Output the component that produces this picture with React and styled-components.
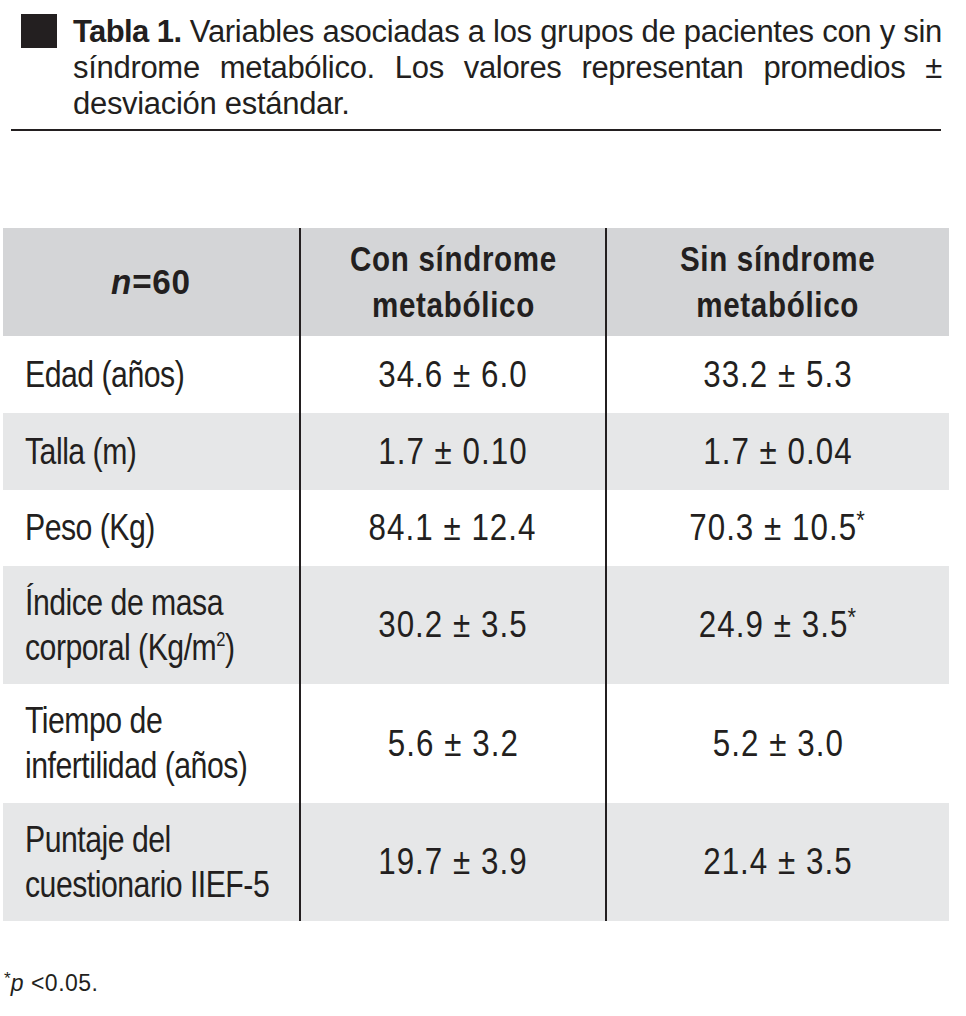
import styled, { createGlobalStyle } from 'styled-components';

const GlobalStyle = createGlobalStyle`
  html, body {
    margin: 0;
    padding: 0;
    background: #ffffff;
  }
  body {
    font-family: 'Liberation Sans', Arial, sans-serif;
    color: #231f20;
  }
`;

// label: first line, second line (optional), sup after the second line
const rows = [
  { label: ['Edad (años)'], con: '34.6 ± 6.0', sin: '33.2 ± 5.3', height: 77, shade: false },
  { label: ['Talla (m)'], con: '1.7 ± 0.10', sin: '1.7 ± 0.04', height: 77, shade: true },
  { label: ['Peso (Kg)'], con: '84.1 ± 12.4', sin: '70.3 ± 10.5', star: true, height: 76, shade: false },
  {
    label: ['Índice de masa', 'corporal (Kg/m'],
    sup: '2',
    tail: ')',
    con: '30.2 ± 3.5',
    sin: '24.9 ± 3.5',
    star: true,
    height: 118,
    shade: true,
  },
  { label: ['Tiempo de', 'infertilidad (años)'], con: '5.6 ± 3.2', sin: '5.2 ± 3.0', height: 119, shade: false },
  { label: ['Puntaje del', 'cuestionario IIEF-5'], con: '19.7 ± 3.9', sin: '21.4 ± 3.5', height: 118, shade: true },
];

const App = () => {
  return (
    <>
      <GlobalStyle />
      <Page>
        <Caption>
          <Marker />
          <CaptionText>
            <CaptionLine $justify>
              <strong>Tabla 1.</strong> Variables asociadas a los grupos de pacientes con y sin
            </CaptionLine>
            <CaptionLine $justify>síndrome metabólico. Los valores representan promedios ±</CaptionLine>
            <CaptionLine>desviación estándar.</CaptionLine>
          </CaptionText>
        </Caption>
        <Rule />

        <Table>
          <Row $height={108} $tone="head">
            <HeadCell>
              <Squeeze $x={0.95}>
                <em>n</em>=60
              </Squeeze>
            </HeadCell>
            <HeadCell $divided>
              <Squeeze $x={0.845}>
                Con síndrome
                <br />
                metabólico
              </Squeeze>
            </HeadCell>
            <HeadCell $divided>
              <Squeeze $x={0.845}>
                Sin síndrome
                <br />
                metabólico
              </Squeeze>
            </HeadCell>
          </Row>
          {rows.map((r, i) => (
            <Row key={i} $height={r.height} $tone={r.shade ? 'gray' : 'white'}>
              <LabelCell>
                <Squeeze $x={0.84} $origin="left center">
                  {r.label[0]}
                  {r.label[1] && (
                    <>
                      <br />
                      {r.label[1]}
                    </>
                  )}
                  {r.sup && <Sup>{r.sup}</Sup>}
                  {r.tail}
                </Squeeze>
              </LabelCell>
              <ValueCell $divided>
                <Squeeze $x={0.87}>{r.con}</Squeeze>
              </ValueCell>
              <ValueCell $divided>
                <Squeeze $x={0.87}>
                  {r.sin}
                  {r.star && <Star>*</Star>}
                </Squeeze>
              </ValueCell>
            </Row>
          ))}
        </Table>

        <Footnote>
          <FootStar>*</FootStar>
          <em>p</em> &lt;0.05.
        </Footnote>
      </Page>
    </>
  );
};

const Page = styled.div`
  width: 966px;
  padding-top: 14px;
  box-sizing: border-box;
`;

const Caption = styled.div`
  display: flex;
  align-items: flex-start;
`;

const Marker = styled.div`
  flex: none;
  width: 36px;
  height: 34px;
  margin: 0 16px 0 21px;
  background: #231f20;
`;

const CaptionText = styled.div`
  width: 869px;
  font-family: 'Liberation Sans', Arial, sans-serif;
  font-size: 31px;
  line-height: 36px;
  letter-spacing: -0.3px;
  color: #231f20;

  strong {
    font-weight: 700;
    letter-spacing: -0.6px;
  }
`;

const CaptionLine = styled.div`
  white-space: nowrap;
  text-align: ${p => (p.$justify ? 'justify' : 'left')};
  text-align-last: ${p => (p.$justify ? 'justify' : 'left')};
`;

const Rule = styled.div`
  width: 930px;
  height: 1.5px;
  margin: 7px 0 0 11px;
  background: #231f20;
`;

const Table = styled.div`
  margin: 97px 0 0 3px;
  width: 946px;
  display: flex;
  flex-direction: column;
`;

const tones = {
  head: '#d4d5d7',
  gray: '#e6e7e8',
  white: '#ffffff',
};

const Row = styled.div`
  display: grid;
  grid-template-columns: 296px 306px 344px;
  height: ${p => p.$height}px;
  background: ${p => tones[p.$tone]};
`;

const Cell = styled.div`
  box-sizing: border-box;
  display: flex;
  align-items: center;
  min-width: 0;
  border-left: ${p => (p.$divided ? '2px solid #231f20' : 'none')};
  font-family: 'Liberation Sans', Arial, sans-serif;
  color: #231f20;
`;

const HeadCell = styled(Cell)`
  justify-content: center;
  text-align: center;
  font-weight: 700;
  font-size: 35px;
  line-height: 46px;
  letter-spacing: 0.8px;

  em {
    font-style: italic;
  }
`;

const LabelCell = styled(Cell)`
  padding-left: 22px;
  font-size: 36px;
  line-height: 45px;
  letter-spacing: -0.6px;
`;

const ValueCell = styled(Cell)`
  justify-content: center;
  font-size: 36px;
  line-height: 45px;
  letter-spacing: 1.2px;
`;

// the print face is a condensed grotesque; squeeze the sans horizontally
const Squeeze = styled.span`
  display: inline-block;
  white-space: nowrap;
  transform: scaleX(${p => p.$x});
  transform-origin: ${p => p.$origin || 'center center'};
`;

const Sup = styled.sup`
  font-size: 0.55em;
  line-height: 0;
  vertical-align: 0.7em;
`;

const Star = styled.sup`
  font-size: 0.7em;
  line-height: 0;
  vertical-align: 0.45em;
  margin-left: -1px;
`;

const Footnote = styled.div`
  margin: 49px 0 0 4px;
  font-family: 'Liberation Sans', Arial, sans-serif;
  font-size: 23px;
  line-height: 26px;
  letter-spacing: 0.5px;
  color: #231f20;

  em {
    font-style: italic;
  }
`;

const FootStar = styled.sup`
  font-size: 0.75em;
  line-height: 0;
  vertical-align: 0.4em;
  margin-right: 0;
  letter-spacing: 0;
`;

export default App;
